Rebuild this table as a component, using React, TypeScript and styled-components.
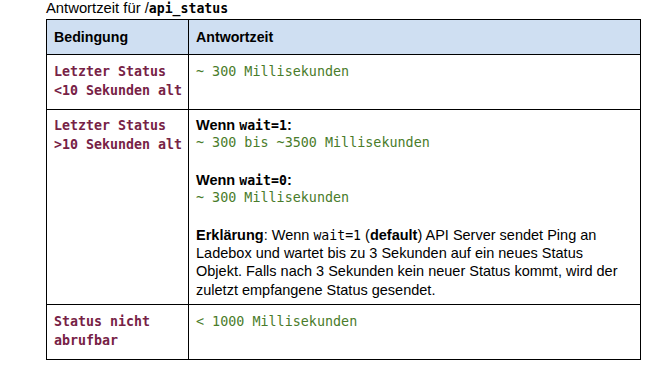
import React from 'react';
import styled, { createGlobalStyle } from 'styled-components';

const GlobalStyle = createGlobalStyle`
  html, body {
    margin: 0;
    padding: 0;
    background: #fff;
  }
  body {
    font-family: 'Liberation Sans', Arial, sans-serif;
    color: #000;
  }
`;

const Page = styled.div`
  padding: 0 0 0 46px;
  width: 594px;
`;

const Caption = styled.div`
  font-size: 14.8px;
  line-height: 17px;
  height: 19px;
`;

const Code = styled.span<{ $bold?: boolean }>`
  font-family: 'DejaVu Sans Mono', 'Liberation Mono', monospace;
  font-size: 13.2px;
  line-height: 1;
  font-weight: ${(p) => (p.$bold ? 700 : 400)};
`;

const Table = styled.table`
  width: 595px;
  border-collapse: collapse;
  table-layout: fixed;
`;

const Col = styled.col<{ $width?: number }>`
  width: ${(p) => (p.$width ? `${p.$width}px` : 'auto')};
`;

const HeadCell = styled.th`
  height: 35px;
  padding: 0 7px;
  background: #cfdff2;
  border: 1px solid #000;
  text-align: left;
  vertical-align: middle;
  font-size: 14.2px;
  font-weight: 700;
  box-sizing: border-box;
`;

const Cell = styled.td<{ $height: number; $top: number }>`
  height: ${(p) => p.$height}px;
  padding: ${(p) => p.$top}px 12px 0 7px;
  border: 1px solid #000;
  vertical-align: top;
  box-sizing: border-box;
  font-size: 14.5px;
  line-height: 18.3px;
`;

const Condition = styled.div`
  font-family: 'DejaVu Sans Mono', 'Liberation Mono', monospace;
  font-size: 13.3px;
  font-weight: 700;
  color: #772246;
  line-height: 18.6px;
  white-space: nowrap;
`;

const Timing = styled.div`
  font-family: 'DejaVu Sans Mono', 'Liberation Mono', monospace;
  font-size: 13.4px;
  color: #4a7c2b;
  line-height: 18.3px;
  white-space: nowrap;
`;

const Label = styled.div`
  font-weight: 700;
`;

const Block = styled.div`
  & + & {
    margin-top: 18.3px;
  }
`;

const rows = [
  { cond: ['Letzter Status', '<10 Sekunden alt'], time: '~ 300 Millisekunden', height: 55, top: 8 },
];

export default function App() {
  return (
    <>
      <GlobalStyle />
      <Page>
        <Caption>
          Antwortzeit für /<Code $bold>api_status</Code>
        </Caption>
        <Table>
          <colgroup>
            <Col $width={142} />
            <Col />
          </colgroup>
          <thead>
            <tr>
              <HeadCell>Bedingung</HeadCell>
              <HeadCell>Antwortzeit</HeadCell>
            </tr>
          </thead>
          <tbody>
            {rows.map((r) => (
              <tr key={r.time}>
                <Cell $height={r.height} $top={r.top}>
                  {r.cond.map((c) => (
                    <Condition key={c}>{c}</Condition>
                  ))}
                </Cell>
                <Cell $height={r.height} $top={r.top}>
                  <Timing>{r.time}</Timing>
                </Cell>
              </tr>
            ))}
            <tr>
              <Cell $height={195} $top={7}>
                <Condition>Letzter Status</Condition>
                <Condition>&gt;10 Sekunden alt</Condition>
              </Cell>
              <Cell $height={195} $top={6}>
                <Block>
                  <Label>
                    Wenn <Code $bold>wait=1</Code>:
                  </Label>
                  <Timing>~ 300 bis ~3500 Millisekunden</Timing>
                </Block>
                <Block>
                  <Label>
                    Wenn <Code $bold>wait=0</Code>:
                  </Label>
                  <Timing>~ 300 Millisekunden</Timing>
                </Block>
                <Block>
                  <b>Erklärung</b>: Wenn <Code>wait=1</Code> (<b>default</b>) API Server sendet Ping an
                  Ladebox und wartet bis zu 3 Sekunden auf ein neues Status Objekt. Falls nach 3
                  Sekunden kein neuer Status kommt, wird der zuletzt empfangene Status gesendet.
                </Block>
              </Cell>
            </tr>
            <tr>
              <Cell $height={55} $top={8}>
                <Condition>Status nicht</Condition>
                <Condition>abrufbar</Condition>
              </Cell>
              <Cell $height={55} $top={8}>
                <Timing>&lt; 1000 Millisekunden</Timing>
              </Cell>
            </tr>
          </tbody>
        </Table>
      </Page>
    </>
  );
}
